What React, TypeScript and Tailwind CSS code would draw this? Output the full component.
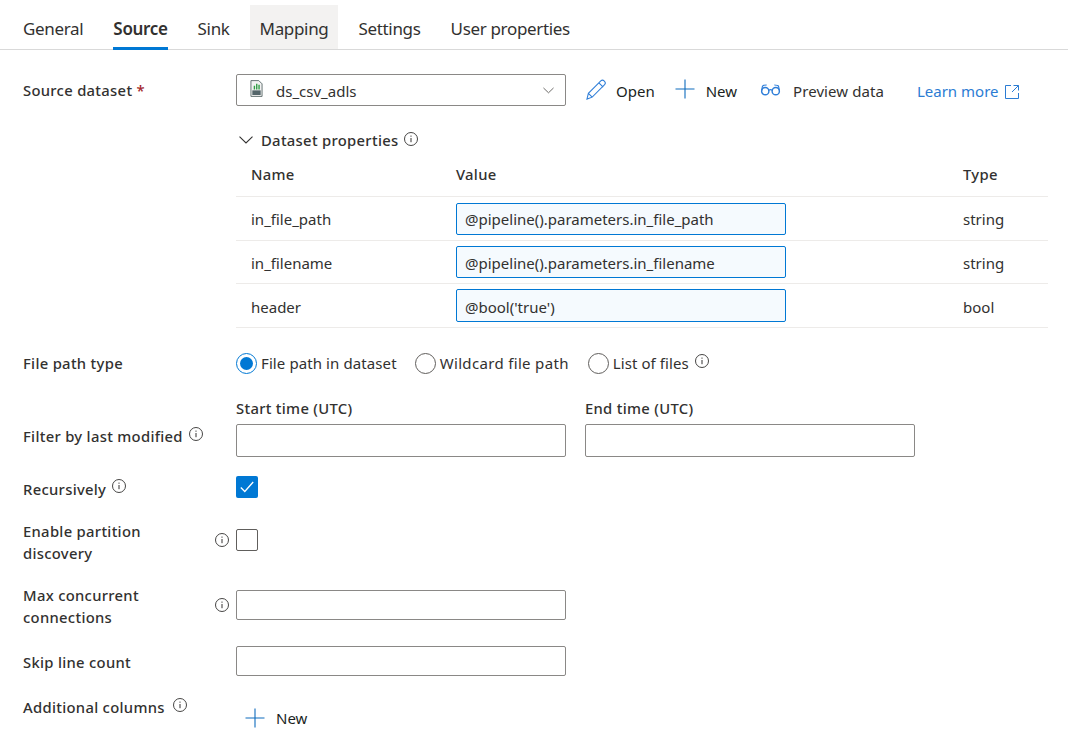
import React from "react";

const Info = ({ className = "" }: { className?: string }) => (
  <svg viewBox="0 0 14 14" className={`w-[14px] h-[14px] shrink-0 ${className}`} fill="none">
    <circle cx="7" cy="7" r="6.5" stroke="#323130" strokeWidth="0.9" />
    <path d="M7 6v4.2" stroke="#323130" strokeWidth="1" />
    <circle cx="7" cy="4.1" r="0.7" fill="#323130" />
  </svg>
);

const Plus = ({ className = "" }: { className?: string }) => (
  <svg viewBox="0 0 20 20" className={`w-5 h-5 shrink-0 ${className}`} fill="none">
    <path d="M10 0.5v19M0.5 10h19" stroke="#0f6cbd" strokeWidth="1.1" />
  </svg>
);

const Input = ({ className = "" }: { className?: string }) => (
  <div className={`w-[330px] border border-[#8a8886] rounded-[2px] bg-white ${className}`} />
);

const Radio = ({ on, label, className = "", text = "" }: { on?: boolean; label: string; className?: string; text?: string }) => (
  <div className={`flex items-center ${className}`}>
    {on ? (
      <span className="w-[21px] h-[21px] rounded-full border border-[#0078d4] flex items-center justify-center">
        <span className="w-[13px] h-[13px] rounded-full bg-[#0078d4]" />
      </span>
    ) : (
      <span className="w-[21px] h-[21px] rounded-full border border-[#605e5c]" />
    )}
    <span className={`ml-[4px] whitespace-nowrap ${text}`}>{label}</span>
  </div>
);

const ParamRow = ({ name, value, type, h, input, cell = "" }: { name: string; value: string; type: string; h: string; input: string; cell?: string }) => (
  <div className={`flex items-center border-b border-[#edebe9] ${h}`}>
    <div className={`w-[220px] pl-[15px] ${cell}`}>{name}</div>
    <div className={`w-[330px] border border-[#0078d4] rounded-[2px] bg-[#f5fafe] pl-[8px] flex items-center ${input} ${cell}`}>{value}</div>
    <div className={`ml-[177px] ${cell}`}>{type}</div>
  </div>
);

export default function App() {
  const tabs = ["General", "Source", "Sink", "Mapping", "Settings", "User properties"];
  return (
    <div
      className="w-[1068px] h-[750px] overflow-hidden bg-white text-[#323130] text-[15px] leading-[22px]"
      style={{ fontFamily: '"Noto Sans", "Open Sans", sans-serif' }}
    >
      <div className="h-[50px] border-b border-[#d9d9d9] flex items-end pl-[13px] gap-[10px] text-[17px] tracking-[-0.33px]">
        {tabs.map((t) => (
          <div
            key={t}
            className={`relative h-[44px] px-[10px] pt-[3px] flex items-center whitespace-nowrap ${t === "Mapping" ? "bg-[#f3f2f1]" : ""} ${t === "Source" ? "font-semibold" : ""}`}
          >
            {t}
            {t === "Source" && <span className="absolute left-[10px] right-[10px] bottom-[-1px] h-[3px] bg-[#0078d4]" />}
          </div>
        ))}
      </div>

      <div className="flex mt-[24px] h-[32px]">
        <div className="w-[213px] ml-[23px] font-medium text-[14.8px] tracking-[0.3px] pt-[5px]">
          Source dataset <span className="text-[#a4262c]">*</span>
        </div>
        <div className="w-[330px] border border-[#8a8886] rounded-[2px] flex items-center pl-[13px] pr-[11px]">
          <svg viewBox="0 0 14 18" className="w-[13px] h-[17px] mb-[3px]">
            <path d="M1 .5h8.5L13 4v13.5H1z" fill="#f2f2f2" stroke="#5c6b6b" />
            <rect x="2.5" y="11" width="9" height="5" fill="#54656a" />
            <path d="M4 6h1.5v4H4zM6.5 4h1.5v6H6.5zM9 5h1.5v5H9z" fill="#2f9e44" />
          </svg>
          <span className="ml-[13px] pt-[1px]">ds_csv_adls</span>
          <svg viewBox="0 0 12 7" className="w-[11px] h-[7px] ml-auto" fill="none">
            <path d="M.5.7 6 6 11.5.7" stroke="#605e5c" />
          </svg>
        </div>
        <div className="flex items-center pt-[2px]">
          <svg viewBox="0 0 22 22" className="w-[21px] h-[21px] ml-[20px] mb-[4px]" fill="none">
            <path d="M1 21l1.5-6L15.5 2c1-1 2.5-1 3.7.2s1.3 2.7.3 3.7L6.5 19z M13.5 4l4.5 4.5 M2.5 15 6.5 19" stroke="#2f7ed8" strokeWidth="1.1" />
          </svg>
          <span className="ml-[9px] text-[#201f1e]">Open</span>
          <Plus className="ml-[20px] mb-[5px]" />
          <span className="ml-[11px] text-[#201f1e]">New</span>
          <svg viewBox="0 0 22 12" className="w-[21px] h-[12px] ml-[23px] mb-[3px]" fill="none">
            <circle cx="5.5" cy="7.2" r="3.8" stroke="#2f7ed8" strokeWidth="1.5" />
            <circle cx="16.5" cy="7.2" r="3.8" stroke="#2f7ed8" strokeWidth="1.5" />
            <path d="M9.3 6.2c1-.8 2.4-.8 3.4 0M1.7 6.5 2.6 2C3 1 5 .8 7 .8M20.3 6.5 19.4 2C19 1 17 .8 15 .8" stroke="#2f7ed8" strokeWidth="1.2" />
          </svg>
          <span className="ml-[12px] tracking-[0.08px]">Preview data</span>
          <span className="ml-[33px] text-[#2b7cd3]">Learn more</span>
          <svg viewBox="0 0 14 14" className="w-[14px] h-[14px] ml-[6px] mt-[1px]" fill="none">
            <path d="M6 .5H.5v13h13V8M8.5.5h5v5M13.5.5 7 7" stroke="#2b7cd3" />
          </svg>
        </div>
      </div>

      <div className="ml-[236px] w-[812px]">
        <div className="flex items-center h-[22px] mt-[23px] font-medium text-[14.8px] tracking-[0.3px]">
          <svg viewBox="0 0 14 8" className="w-[14px] h-[8px] ml-[3px]" fill="none">
            <path d="M.5.7 7 7 13.5.7" stroke="#323130" strokeWidth="1.1" />
          </svg>
          <span className="ml-[8px]">Dataset properties</span>
          <Info className="ml-[6px] mb-[3px]" />
        </div>
        <div className="flex items-center h-[45px] mt-[1px] border-b border-[#edebe9] font-medium text-[14.8px] tracking-[0.3px] pb-[1px]">
          <div className="w-[220px] pl-[15px]">Name</div>
          <div className="w-[507px]">Value</div>
          <div>Type</div>
        </div>
        <ParamRow name="in_file_path" value="@pipeline().parameters.in_file_path" type="string" h="h-[44px]" input="h-[32px]" />
        <ParamRow name="in_filename" value="@pipeline().parameters.in_filename" type="string" h="h-[43px]" input="h-[32px]" cell="pt-[2px]" />
        <ParamRow name="header" value="@bool('true')" type="bool" h="h-[44px]" input="h-[33px]" cell="pt-[2px]" />
      </div>

      <div className="flex items-center mt-[24px] h-[22px]">
        <div className="w-[213px] ml-[23px] font-medium text-[14.8px] tracking-[0.3px]">File path type</div>
        <Radio on label="File path in dataset" text="tracking-[0.1px]" />
        <Radio label="Wildcard file path" className="ml-[18px]" text="tracking-[0.33px]" />
        <Radio label="List of files" className="ml-[19px]" text="tracking-[0.08px]" />
        <Info className="ml-[6px] mb-[5px]" />
      </div>

      <div className="flex mt-[23px] font-medium text-[14.8px] tracking-[0.3px]">
        <div className="w-[213px] ml-[23px] flex items-center h-[22px] mt-[28px]">
          Filter by last modified
          <Info className="ml-[6px] mb-[4px]" />
        </div>
        <div>
          <div className="h-[22px] mb-[5px]">Start time (UTC)</div>
          <Input className="h-[33px]" />
        </div>
        <div className="ml-[19px]">
          <div className="h-[22px] mb-[5px]">End time (UTC)</div>
          <Input className="h-[33px]" />
        </div>
      </div>

      <div className="flex mt-[19px] h-[22px] font-medium text-[14.8px] tracking-[0.3px]">
        <div className="w-[213px] ml-[23px] flex items-center mt-[3px]">
          Recursively
          <Info className="ml-[6px] mb-[5px]" />
        </div>
        <div className="w-[22px] h-[22px] rounded-[2px] bg-[#0078d4] flex items-center justify-center">
          <svg viewBox="0 0 14 12" className="w-[14px] h-[12px]" fill="none">
            <path d="M.8 6.5 4.8 10.5 13.2 1" stroke="white" strokeWidth="1.3" />
          </svg>
        </div>
      </div>

      <div className="flex mt-[31px] h-[44px] font-medium text-[14.8px] tracking-[0.3px]">
        <div className="w-[192px] ml-[23px] mt-[-9px]">
          Enable partition
          <br />
          discovery
        </div>
        <Info className="mr-[7px] mt-[4px]" />
        <div className="w-[22px] h-[22px] rounded-[2px] border border-[#605e5c]" />
      </div>

      <div className="flex mt-[17px] h-[30px] font-medium text-[14.8px] tracking-[0.3px]">
        <div className="w-[192px] ml-[23px] mt-[-6px]">
          Max concurrent
          <br />
          connections
        </div>
        <Info className="mr-[7px] mt-[8px]" />
        <Input className="h-[30px]" />
      </div>

      <div className="flex mt-[26px] h-[30px] font-medium text-[14.8px] tracking-[0.3px]">
        <div className="w-[213px] ml-[23px] pt-[5px]">Skip line count</div>
        <Input className="h-[30px]" />
      </div>

      <div className="flex mt-[20px]">
        <div className="w-[213px] ml-[23px] flex items-center font-medium text-[14.8px] tracking-[0.3px] h-[22px]">
          Additional columns
          <Info className="ml-[8px] mb-[4px]" />
        </div>
        <div className="flex items-center ml-[9px] mt-[11px] h-[22px]">
          <Plus />
          <span className="ml-[11px] text-[#201f1e]">New</span>
        </div>
      </div>
    </div>
  );
}
